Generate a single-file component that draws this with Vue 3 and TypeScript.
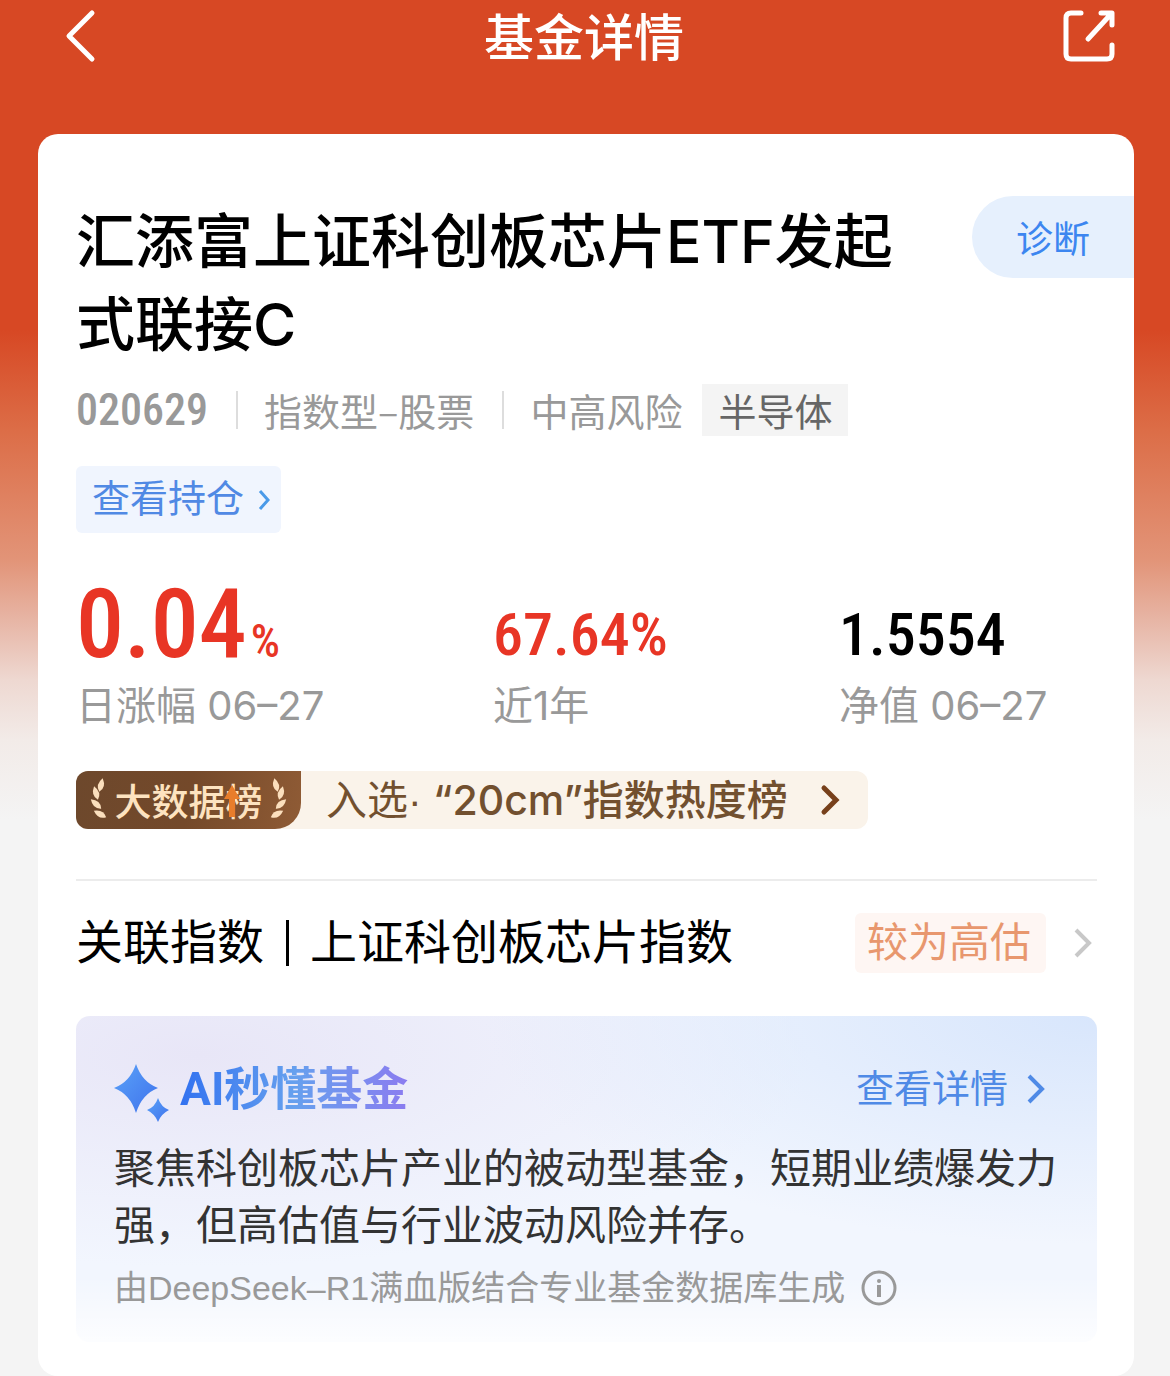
<script setup lang="ts">
interface Stat {
  value: string
  unit: string
  label: string
  tone: 'rise' | 'plain'
  large: boolean
}

const fund = {
  name: '汇添富上证科创板芯片ETF发起式联接C',
  code: '020629',
  type: '指数型–股票',
  risk: '中高风险',
  sector: '半导体',
}

const stats: Stat[] = [
  { value: '0.04', unit: '%', label: '日涨幅 06–27', tone: 'rise', large: true },
  { value: '67.64%', unit: '', label: '近1年', tone: 'rise', large: false },
  { value: '1.5554', unit: '', label: '净值 06–27', tone: 'plain', large: false },
]

const leaves = [
  'translate(11 5) rotate(14)',
  'translate(6 13) rotate(-16)',
  'translate(6 24) rotate(-48)',
  'translate(10 34) rotate(-62)',
]
</script>

<template>
  <div class="page">
    <header class="topbar">
      <button class="icon-button" type="button" aria-label="返回">
        <svg width="32" height="56" viewBox="0 0 32 56" fill="none">
          <path d="M27 5 L4 28 L27 51" stroke="#fff" stroke-width="5" stroke-linecap="round" stroke-linejoin="round" />
        </svg>
      </button>
      <h1 class="topbar-title">基金详情</h1>
      <button class="icon-button" type="button" aria-label="分享">
        <svg width="56" height="56" viewBox="0 0 56 56" fill="none" stroke="#fff" stroke-width="5" stroke-linecap="round" stroke-linejoin="round">
          <path d="M20 5 H10 Q5 5 5 10 V46 Q5 51 10 51 H46 Q51 51 51 46 V37" />
          <path d="M27 31 L50 6 M40 5 H51 V17" />
        </svg>
      </button>
    </header>

    <main class="card">
      <div class="name-row">
        <h2 class="fund-name">{{ fund.name }}</h2>
        <button class="diagnose" type="button">诊断</button>
      </div>

      <div class="content">
        <div class="meta">
          <span class="code">{{ fund.code }}</span>
          <span class="meta-item">{{ fund.type }}</span>
          <span class="meta-item">{{ fund.risk }}</span>
          <span class="sector">{{ fund.sector }}</span>
        </div>

        <a class="holdings" href="#holdings">
          查看持仓
          <svg width="12" height="22" viewBox="0 0 12 22" fill="none">
            <path d="M2 2 L10 11 L2 20" stroke="#4a9ae8" stroke-width="3" />
          </svg>
        </a>

        <dl class="stats">
          <div v-for="stat in stats" :key="stat.label" class="stat">
            <dd class="stat-value" :class="[stat.tone, { large: stat.large }]">
              {{ stat.value }}<span v-if="stat.unit" class="unit">{{ stat.unit }}</span>
            </dd>
            <dt class="stat-label">{{ stat.label }}</dt>
          </div>
        </dl>

        <a class="ranking" href="#ranking">
          <span class="badge">
            <svg width="20" height="40" viewBox="0 0 20 40">
              <path v-for="leaf in leaves" :key="leaf" d="M0 -7 Q6 1 0 7 Q-6 1 0 -7" :transform="leaf" fill="#fbdfbd" />
            </svg>
            <span class="badge-text">
              大数据榜
              <svg class="arrow" width="16" height="32" viewBox="0 0 16 32">
                <path d="M8 0 L16 14 H11 V32 H5 V14 H0 Z" fill="#e87d2b" />
              </svg>
            </span>
            <svg width="20" height="40" viewBox="0 0 20 40">
              <g transform="translate(20 0) scale(-1 1)">
                <path v-for="leaf in leaves" :key="leaf" d="M0 -7 Q6 1 0 7 Q-6 1 0 -7" :transform="leaf" fill="#fbdfbd" />
              </g>
            </svg>
          </span>
          <span class="ranking-text">入选· <b>“20cm”指数热度榜</b></span>
          <svg width="20" height="32" viewBox="0 0 20 32" fill="none">
            <path d="M4 4 L16 16 L4 28" stroke="#77401b" stroke-width="5" stroke-linecap="round" />
          </svg>
        </a>

        <a class="index-row" href="#index">
          <span class="index-name">关联指数<i class="bar"></i>上证科创板芯片指数</span>
          <span class="valuation">较为高估</span>
          <svg width="20" height="32" viewBox="0 0 20 32" fill="none">
            <path d="M3 3 L16 16 L3 29" stroke="#c8c8c8" stroke-width="4" />
          </svg>
        </a>

        <section class="ai">
          <div class="ai-head">
            <svg width="56" height="56" viewBox="0 0 56 56">
              <defs>
                <linearGradient id="spark" x1="0" y1="0" x2="1" y2="1">
                  <stop offset="0" stop-color="#5aa2f8" />
                  <stop offset="1" stop-color="#3f72ec" />
                </linearGradient>
              </defs>
              <path d="M22 3 Q28 21 44 27 Q28 33 22 52 Q16 33 0 27 Q16 21 22 3 Z" fill="url(#spark)" />
              <path d="M44 37 Q47 46 55 49 Q47 53 44 61 Q41 53 33 49 Q41 46 44 37 Z" fill="url(#spark)" />
            </svg>
            <h3 class="ai-title">AI秒懂基金</h3>
            <a class="details" href="#details">
              查看详情
              <svg width="20" height="32" viewBox="0 0 20 32" fill="none">
                <path d="M3 3 L16 16 L3 29" stroke="#4f8ae6" stroke-width="4" />
              </svg>
            </a>
          </div>
          <p class="ai-text">聚焦科创板芯片产业的被动型基金，短期业绩爆发力强，但高估值与行业波动风险并存。</p>
          <p class="ai-source">
            由DeepSeek–R1满血版结合专业基金数据库生成
            <button class="icon-button" type="button" aria-label="说明">
              <svg width="36" height="36" viewBox="0 0 36 36" fill="none">
                <circle cx="18" cy="18" r="16" stroke="#999" stroke-width="3" />
                <circle cx="18" cy="11" r="2" fill="#999" />
                <path d="M18 15 V27" stroke="#999" stroke-width="4" />
              </svg>
            </button>
          </p>
        </section>
      </div>
    </main>
  </div>
</template>

<style>
body {
  margin: 0;
  background: #f4f4f4;
}
</style>

<style scoped>
.page {
  font-family: "Liberation Sans", "Noto Sans CJK SC", sans-serif;
  background: linear-gradient(
    #d74824 0,
    #d74824 330px,
    #dc6d47 430px,
    #e29478 560px,
    #e7b5a5 620px,
    #eed8d1 680px,
    #f2ebe8 740px,
    #f4f4f4 820px
  );
}

h1,
h2,
h3,
p,
dl,
dd {
  margin: 0;
}

a {
  text-decoration: none;
}

svg {
  display: block;
  flex: none;
  overflow: visible;
}

.icon-button {
  padding: 0;
  border: 0;
  background: none;
}

.topbar {
  display: flex;
  align-items: flex-start;
  justify-content: space-between;
  height: 126px;
  padding: 8px 53px 0 65px;
}

.topbar-title {
  padding-left: 10px;
  color: #fff;
  font-size: 50px;
  font-weight: 500;
  line-height: 62px;
}

.card {
  margin: 0 36px 0 38px;
  padding: 62px 0 34px;
  border-radius: 20px;
  background: #fff;
}

.name-row {
  display: flex;
  align-items: flex-start;
  justify-content: space-between;
  gap: 40px;
  padding-left: 38px;
}

.fund-name {
  flex: 1;
  margin-top: 4px;
  color: #000;
  font-family: Inter, "Noto Sans CJK SC", sans-serif;
  font-size: 59px;
  font-weight: 500;
  line-height: 83px;
}

.diagnose {
  flex: none;
  height: 82px;
  padding: 0 44px;
  border: 0;
  border-radius: 41px 0 0 41px;
  background: #e6f0fd;
  color: #3c86f0;
  font-family: "Noto Sans CJK SC", sans-serif;
  font-size: 37px;
  line-height: 82px;
}

.content {
  padding: 0 37px 0 38px;
}

.meta {
  display: flex;
  align-items: center;
  height: 52px;
  margin-top: 18px;
  color: #999;
  font-family: "Noto Sans CJK SC", sans-serif;
  font-size: 38px;
  line-height: 52px;
}

.code {
  font-family: "Liberation Sans Narrow", "Roboto Condensed", Roboto, sans-serif;
  font-size: 44px;
  font-weight: 500;
}

.meta-item {
  display: flex;
  align-items: center;
}

.meta-item::before {
  width: 2px;
  height: 38px;
  margin: 0 26px 0 28px;
  background: #ddd;
  content: "";
}

.sector {
  margin-left: 20px;
  padding: 0 16px;
  background: #f4f4f4;
  color: #666;
}

.holdings {
  display: inline-flex;
  align-items: center;
  gap: 14px;
  height: 67px;
  margin-top: 30px;
  padding: 0 11px 0 16px;
  border-radius: 6px;
  background: #f0f5fe;
  color: #5089e4;
  font-size: 38px;
  line-height: 67px;
  vertical-align: top;
}

.stats {
  display: grid;
  grid-template-columns: 417fr 346fr 258fr;
  align-items: end;
  margin-top: 37px;
}

.stat {
  display: flex;
  flex-direction: column;
}

.stat-value {
  font-family: "Liberation Sans Narrow", "Roboto Condensed", Roboto, sans-serif;
  font-size: 60px;
  font-weight: 500;
  line-height: 86px;
}

.stat-value.large {
  font-size: 96px;
  line-height: 108px;
}

.rise {
  color: #e83525;
}

.plain {
  color: #000;
}

.unit {
  margin-left: 4px;
  font-size: 46px;
  line-height: 46px;
}

.stat-label {
  color: #999;
  font-family: Inter, "Noto Sans CJK SC", sans-serif;
  font-size: 40px;
  line-height: 56px;
  white-space: nowrap;
}

.ranking {
  display: flex;
  align-items: center;
  width: fit-content;
  height: 58px;
  margin-top: 37px;
  padding-right: 28px;
  border-radius: 12px;
  background: #faf3ea;
  color: #72502f;
}

.badge {
  display: flex;
  align-items: center;
  justify-content: space-between;
  box-sizing: border-box;
  width: 225px;
  height: 58px;
  padding: 0 14px;
  border-radius: 12px 0 26px 12px;
  background: linear-gradient(100deg, #6d482c 0%, #74492a 50%, #8f5b35 100%);
}

.badge-text {
  position: relative;
  color: #fde3c0;
  font-family: "Noto Sans CJK SC", sans-serif;
  font-size: 37px;
  font-weight: 500;
  line-height: 58px;
}

.arrow {
  position: absolute;
  top: 14px;
  right: 23px;
}

.ranking-text {
  margin: 0 32px 0 25px;
  font-size: 41px;
  line-height: 58px;
}

.ranking-text b {
  font-family: Inter, "Noto Sans CJK SC", sans-serif;
  font-weight: 500;
}

.index-row {
  display: flex;
  align-items: center;
  margin-top: 50px;
  padding: 32px 4px 43px 0;
  border-top: 2px solid #ececec;
  color: #000;
}

.index-name {
  display: flex;
  flex: 1;
  align-items: center;
  font-size: 47px;
  line-height: 60px;
}

.bar {
  width: 3px;
  height: 46px;
  margin: 0 21px 0 22px;
  background: #000;
}

.valuation {
  margin-right: 27px;
  padding: 0 15px 0 12px;
  border-radius: 6px;
  background: #fef6f3;
  color: #e8976e;
  font-size: 41px;
  line-height: 60px;
}

.ai {
  padding: 44px 38px 34px;
  border-radius: 14px;
  background:
    linear-gradient(transparent 80%, rgba(255, 255, 255, 0.8)),
    radial-gradient(ellipse 60% 70% at 100% 0, #d8e6fc, transparent),
    radial-gradient(ellipse 60% 65% at 12% 12%, #e8e6f7, transparent),
    #f2f6fe;
}

.ai-head {
  display: flex;
  align-items: center;
  height: 58px;
}

.ai-title {
  margin-left: 10px;
  background: linear-gradient(90deg, #3272f0, #66a0ee 50%, #8b7cf0);
  background-clip: text;
  color: transparent;
  font-family: Roboto, "Noto Sans CJK SC", sans-serif;
  font-size: 46px;
  font-weight: 700;
  line-height: 58px;
}

.details {
  display: flex;
  align-items: center;
  gap: 18px;
  margin-left: auto;
  padding-right: 13px;
  color: #4f8ae6;
  font-size: 38px;
  line-height: 58px;
}

.ai-text {
  margin-top: 23px;
  color: #333;
  font-size: 41px;
  line-height: 57px;
}

.ai-source {
  display: flex;
  align-items: center;
  gap: 16px;
  margin-top: 13px;
  color: #999;
  font-size: 34px;
  line-height: 40px;
}
</style>
